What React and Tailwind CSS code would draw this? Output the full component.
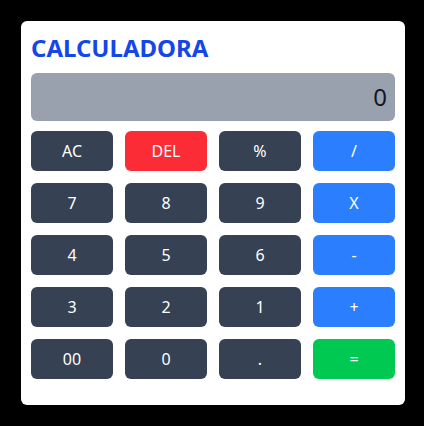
export default function App() {
  const rows = [
    [["AC", "bg-gray-700"], ["DEL", "bg-red-500"], ["%", "bg-gray-700"], ["/", "bg-blue-500"]],
    [["7", "bg-gray-700"], ["8", "bg-gray-700"], ["9", "bg-gray-700"], ["X", "bg-blue-500"]],
    [["4", "bg-gray-700"], ["5", "bg-gray-700"], ["6", "bg-gray-700"], ["-", "bg-blue-500"]],
    [["3", "bg-gray-700"], ["2", "bg-gray-700"], ["1", "bg-gray-700"], ["+", "bg-blue-500"]],
    [["00", "bg-gray-700"], ["0", "bg-gray-700"], [".", "bg-gray-700"], ["=", "bg-green-500"]],
  ];
  return (
    <div className="w-[424px] h-[426px] bg-black p-[21px] font-['Noto_Sans',sans-serif]">
      <div className="w-[384px] h-[384px] bg-white rounded-md px-[10px] pt-[15px]">
        <h1 className="text-2xl font-bold text-blue-700 leading-none">CALCULADORA</h1>
        <div className="mt-[13px] h-[48px] bg-gray-400 rounded-md flex items-center justify-end px-2 text-2xl text-gray-900">0</div>
        <div className="mt-[10px] grid grid-cols-4 gap-3">
          {rows.flat().map(([label, bg], i) => (
            <button key={i} className={`${bg} h-10 rounded-md text-white text-base flex items-center justify-center`}>{label}</button>
          ))}
        </div>
      </div>
    </div>
  );
}
